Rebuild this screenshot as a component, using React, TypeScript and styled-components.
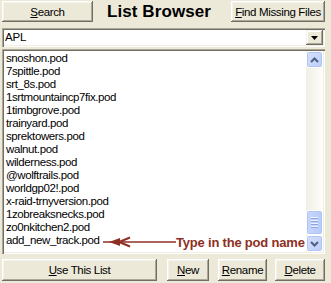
import React from 'react';
import styled, { createGlobalStyle } from 'styled-components';

const GlobalStyle = createGlobalStyle`
  html, body {
    margin: 0;
    padding: 0;
    background: #ece9d8;
  }
  body {
    font-family: 'Liberation Sans', Arial, sans-serif;
    font-size: 11px;
    color: #000;
  }
`;

const pods = [
  'snoshon.pod',
  '7spittle.pod',
  'srt_8s.pod',
  '1srtmountaincp7fix.pod',
  '1timbgrove.pod',
  'trainyard.pod',
  'sprektowers.pod',
  'walnut.pod',
  'wilderness.pod',
  '@wolftrails.pod',
  'worldgp02!.pod',
  'x-raid-trnyversion.pod',
  '1zobreaksnecks.pod',
  'zo0nkitchen2.pod',
  'add_new_track.pod',
];

const Window = styled.div`
  position: relative;
  width: 331px;
  height: 283px;
  box-sizing: border-box;
  padding: 1px 6px 2px 2px;
  display: flex;
  flex-direction: column;
  overflow: hidden;
`;

const Header = styled.div`
  display: flex;
  align-items: center;
  height: 21px;
`;

const Title = styled.div`
  flex: 1;
  text-align: center;
  padding-right: 6px;
  font-size: 17px;
  font-weight: bold;
  letter-spacing: 0.1px;
`;

/* classic raised 3D button */
const Button = styled.button<{ $w: number; $ml?: number }>`
  width: ${({ $w }) => $w}px;
  height: 100%;
  margin: 0 0 0 ${({ $ml }) => $ml ?? 0}px;
  padding: 0;
  border: none;
  background: #ece9d8;
  box-shadow: inset -1px -1px #716f64, inset 1px 1px #fff, inset -2px -2px #aca899,
    inset 2px 2px #f5f4ea;
  font-family: inherit;
  font-size: 11.5px;
  letter-spacing: -0.35px;
  color: #000;
  flex-shrink: 0;
`;

const Key = styled.span`
  text-decoration: underline;
  text-underline-offset: 1px;
`;

const Sunken = styled.div`
  background: #fff;
  box-sizing: border-box;
  padding: 2px;
  box-shadow: inset 1px 1px #aca899, inset 2px 2px #716f64, inset -1px -1px #fff,
    inset -2px -2px #f1efe2;
`;

const Combo = styled(Sunken)`
  margin-top: 6px;
  height: 19px;
  display: flex;
`;

const ComboText = styled.div`
  flex: 1;
  padding-left: 1px;
  line-height: 15px;
  font-size: 11.5px;
  letter-spacing: -0.2px;
`;

const DropButton = styled.div`
  width: 17px;
  height: 15px;
  display: flex;
  align-items: center;
  justify-content: center;
  background: #ece9d8;
  box-shadow: inset -1px -1px #716f64, inset 1px 1px #f5f4ea, inset -2px -2px #aca899,
    inset 2px 2px #fff;
`;

const ListBox = styled(Sunken)`
  margin-top: 2px;
  height: 205px;
  display: flex;
`;

const Items = styled.div`
  flex: 1;
  padding: 1px 0 0 2px;
  overflow: hidden;
`;

const Item = styled.div`
  height: 13px;
  line-height: 13px;
  font-size: 11.5px;
  white-space: nowrap;
  letter-spacing: -0.4px;
`;

const Scrollbar = styled.div`
  width: 17px;
  display: flex;
  flex-direction: column;
  background: linear-gradient(to right, #f1efe6, #f8f7f2 60%, #fefefb);
`;

const ScrollButton = styled.div`
  height: 17px;
  box-sizing: border-box;
  border: 1px solid #fff;
  border-radius: 3px;
  display: flex;
  align-items: center;
  justify-content: center;
  background: linear-gradient(135deg, #d6e1fd, #bccdf8);
  box-shadow: inset 0 0 0 1px #b1c5f5;
`;

const Track = styled.div`
  flex: 1;
`;

const Thumb = styled(ScrollButton)`
  height: 25px;
  flex-direction: column;
  gap: 1px;
  background: linear-gradient(to right, #c9d7fc, #bfd0fb 50%, #b8cbf8);
`;

const Grip = styled.div`
  width: 7px;
  height: 1px;
  background: #eef3fe;
  border-bottom: 1px solid #8ca5e3;
`;

const Footer = styled.div`
  margin-top: 5px;
  height: 22px;
  display: flex;
`;

/* red call-out over the list */
const Callout = styled.div`
  position: absolute;
  left: 103px;
  top: 235px;
  display: flex;
  align-items: center;
  height: 14px;
`;

const CalloutText = styled.span`
  font-size: 13px;
  font-weight: bold;
  letter-spacing: -0.2px;
  color: #8e3024;
`;

function Chevron({ up }: { up: boolean }) {
  return (
    <svg width="9" height="6" viewBox="0 0 9 6">
      <polyline
        points={up ? '1,5 4.5,1.5 8,5' : '1,1 4.5,4.5 8,1'}
        fill="none"
        stroke="#4d6185"
        strokeWidth="2"
      />
    </svg>
  );
}

export default function App() {
  return (
    <>
      <GlobalStyle />
      <Window>
        <Header>
          <Button $w={91}>
            <Key>S</Key>earch
          </Button>
          <Title>List Browser</Title>
          <Button $w={94}>
            <Key>F</Key>ind Missing Files
          </Button>
        </Header>

        <Combo>
          <ComboText>APL</ComboText>
          <DropButton>
            <svg width="7" height="4" viewBox="0 0 7 4">
              <polygon points="0,0 7,0 3.5,4" fill="#000" />
            </svg>
          </DropButton>
        </Combo>

        <ListBox>
          <Items>
            {pods.map((p) => (
              <Item key={p}>{p}</Item>
            ))}
          </Items>
          <Scrollbar>
            <ScrollButton>
              <Chevron up />
            </ScrollButton>
            <Track />
            <Thumb>
              <Grip />
              <Grip />
              <Grip />
              <Grip />
            </Thumb>
            <ScrollButton>
              <Chevron up={false} />
            </ScrollButton>
          </Scrollbar>
        </ListBox>

        <Footer>
          <Button $w={155}>
            <Key>U</Key>se This List
          </Button>
          <Button $w={42} $ml={10}>
            <Key>N</Key>ew
          </Button>
          <Button $w={49} $ml={9}>
            <Key>R</Key>ename
          </Button>
          <Button $w={50} $ml={8}>
            <Key>D</Key>elete
          </Button>
        </Footer>

        <Callout>
          <svg width="73" height="14" viewBox="0 0 73 14">
            <line x1="0" y1="7" x2="73" y2="7" stroke="#8e3024" strokeWidth="1.3" />
            <polygon points="6,7 17,3 17,11" fill="#8e3024" />
            <polyline
              points="27,2.5 16,7 27,11.5"
              fill="none"
              stroke="#8e3024"
              strokeWidth="2"
            />
          </svg>
          <CalloutText>Type in the pod name</CalloutText>
        </Callout>
      </Window>
    </>
  );
}
